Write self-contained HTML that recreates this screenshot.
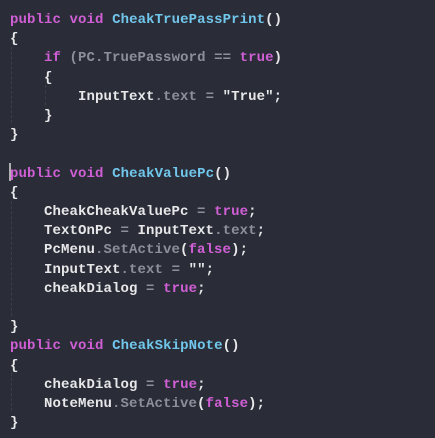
<!DOCTYPE html><html><head><style>
body{margin:0;width:435px;height:438px;background:#2a2d37;overflow:hidden}
pre{margin:0;padding:11px 0 0 10px;font-family:"Liberation Mono",monospace;font-weight:bold;font-size:14px;line-height:19.2px;color:#e8e8ea;letter-spacing:0.1px}
.k{color:#d05fd6}.f{color:#71c6ec}.m{color:#8c909a}.p{color:#c8c8cc}
.g{position:absolute;width:1px;border-left:1px dashed #3b3f4a}
.c{position:absolute;left:9px;top:163px;width:2px;height:18px;background:#b0b0b0}
</style></head><body>
<div class="g" style="left:11px;top:47px;height:76px"></div>
<div class="g" style="left:45px;top:85px;height:20px"></div>
<div class="g" style="left:11px;top:201px;height:115px"></div>
<div class="g" style="left:11px;top:373px;height:38px"></div>
<div class="c"></div>
<pre><span class="k">public</span> <span class="k">void</span> <span class="f">CheakTruePassPrint</span>()
{
    <span class="k">if</span> <span class="m">(PC.TruePassword</span> <span class="m">==</span> <span class="k">true</span>)
    {
        InputText<span class="m">.text</span> <span class="m">=</span> "True";
    }
}

<span class="k">public</span> <span class="k">void</span> <span class="f">CheakValuePc</span>()
{
    CheakCheakValuePc <span class="m">=</span> <span class="k">true</span>;
    TextOnPc <span class="m">=</span> InputText<span class="m">.text</span>;
    PcMenu<span class="m">.SetActive</span>(<span class="k">false</span>);
    InputText<span class="m">.text</span> <span class="m">=</span> "";
    cheakDialog <span class="m">=</span> <span class="k">true</span>;

}
<span class="k">public</span> <span class="k">void</span> <span class="f">CheakSkipNote</span>()
{
    cheakDialog <span class="m">=</span> <span class="k">true</span>;
    NoteMenu<span class="m">.SetActive</span>(<span class="k">false</span>);
}</pre>
</body></html>
